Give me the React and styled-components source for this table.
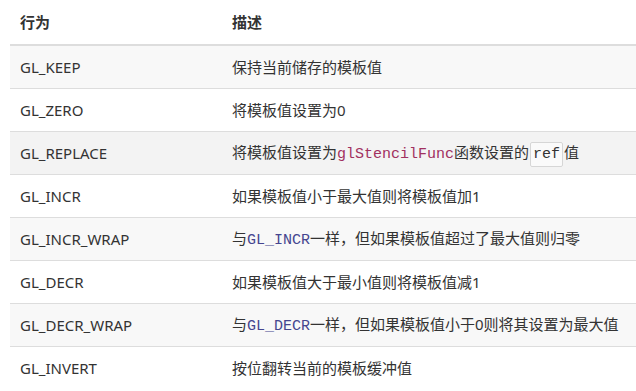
import React from "react";
import styled, { createGlobalStyle } from "styled-components";

const Global = createGlobalStyle`
  html, body { margin: 0; padding: 0; background: #fff; }
  body { font-family: "Noto Sans", "Noto Sans CJK SC", sans-serif; color: #333; }
`;

const Wrap = styled.div`
  padding: 0 0 0 10px;
`;

const Table = styled.table`
  width: 100%;
  table-layout: fixed;
  border-collapse: collapse;
  font-size: 15px;
  line-height: 20px;
`;

const Col = styled.col`
  width: ${(p) => p.$w || "auto"};
`;

const Th = styled.th`
  text-align: left;
  font-weight: 700;
  height: 44px;
  padding: 0 10px;
  border-bottom: 2px solid #dddddd;
  vertical-align: middle;
`;

const Tr = styled.tr`
  background: ${(p) => (p.$hover ? "#f3f3f3" : p.$odd ? "#f8f8f8" : "#ffffff")};
  border-bottom: 1px solid #dddddd;
  &:last-child { border-bottom: none; }
`;

const Td = styled.td`
  height: 43px;
  padding: 1px 10px 0;
  box-sizing: border-box;
  vertical-align: middle;
  white-space: nowrap;
`;

const Code = styled.code`
  font-family: "Liberation Mono", "DejaVu Sans Mono", monospace;
  font-size: 15px;
  color: ${(p) => p.$color || "#c7254e"};
`;

const Boxed = styled.code`
  font-family: "Liberation Mono", "DejaVu Sans Mono", monospace;
  font-size: 15px;
  color: #333;
  background: #fafafa;
  border: 1px solid #d6d6d6;
  border-radius: 2px;
  padding: 3px 2px;
  margin: 0 1px;
`;

const rows = [
  ["GL_KEEP", <>保持当前储存的模板值</>],
  ["GL_ZERO", <>将模板值设置为0</>],
  [
    "GL_REPLACE",
    <>
      将模板值设置为<Code $color="#a13060">glStencilFunc</Code>函数设置的<Boxed>ref</Boxed>值
    </>,
  ],
  ["GL_INCR", <>如果模板值小于最大值则将模板值加1</>],
  [
    "GL_INCR_WRAP",
    <>
      与<Code $color="#45458f">GL_INCR</Code>一样，但如果模板值超过了最大值则归零
    </>,
  ],
  ["GL_DECR", <>如果模板值大于最小值则将模板值减1</>],
  [
    "GL_DECR_WRAP",
    <>
      与<Code $color="#45458f">GL_DECR</Code>一样，但如果模板值小于0则将其设置为最大值
    </>,
  ],
  ["GL_INVERT", <>按位翻转当前的模板缓冲值</>],
];

export default function App() {
  return (
    <>
      <Global />
      <Wrap>
        <Table>
          <colgroup>
            <Col $w="212px" />
            <Col />
          </colgroup>
          <thead>
            <tr>
              <Th>行为</Th>
              <Th>描述</Th>
            </tr>
          </thead>
          <tbody>
            {rows.map(([k, v], i) => (
              <Tr key={k} $odd={i % 2 === 0} $hover={i === 2}>
                <Td>{k}</Td>
                <Td>{v}</Td>
              </Tr>
            ))}
          </tbody>
        </Table>
      </Wrap>
    </>
  );
}
